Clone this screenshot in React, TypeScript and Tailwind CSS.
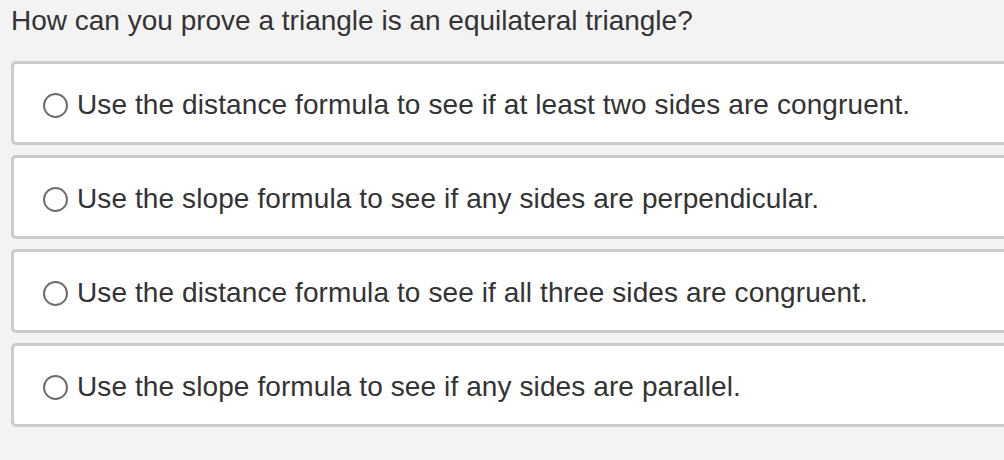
const question = 'How can you prove a triangle is an equilateral triangle?'

const options = [
  'Use the distance formula to see if at least two sides are congruent.',
  'Use the slope formula to see if any sides are perpendicular.',
  'Use the distance formula to see if all three sides are congruent.',
  'Use the slope formula to see if any sides are parallel.',
]

export default function App() {
  return (
    <div className="w-[1004px] h-[460px] overflow-hidden bg-[#f3f3f3] font-['Liberation_Sans',Arial,sans-serif] text-[#333333]">
      <p className="pl-[11px] pt-[5px] text-[28px] leading-[32px]">{question}</p>

      <div className="mt-[24px] flex flex-col gap-[10px] pl-[11px]">
        {options.map((text) => (
          <label
            key={text}
            className="flex h-[84px] w-[1010px] items-center rounded-[5px] border-[3px] border-[#cbcbcb] bg-white pl-[29px] pt-[4px]"
          >
            <span className="mr-[9px] h-[25px] w-[25px] shrink-0 rounded-full border-2 border-[#6e6e6e] bg-white" />
            <span className="text-[28px] leading-[32px] tracking-[0.1px]">{text}</span>
          </label>
        ))}
      </div>
    </div>
  )
}
